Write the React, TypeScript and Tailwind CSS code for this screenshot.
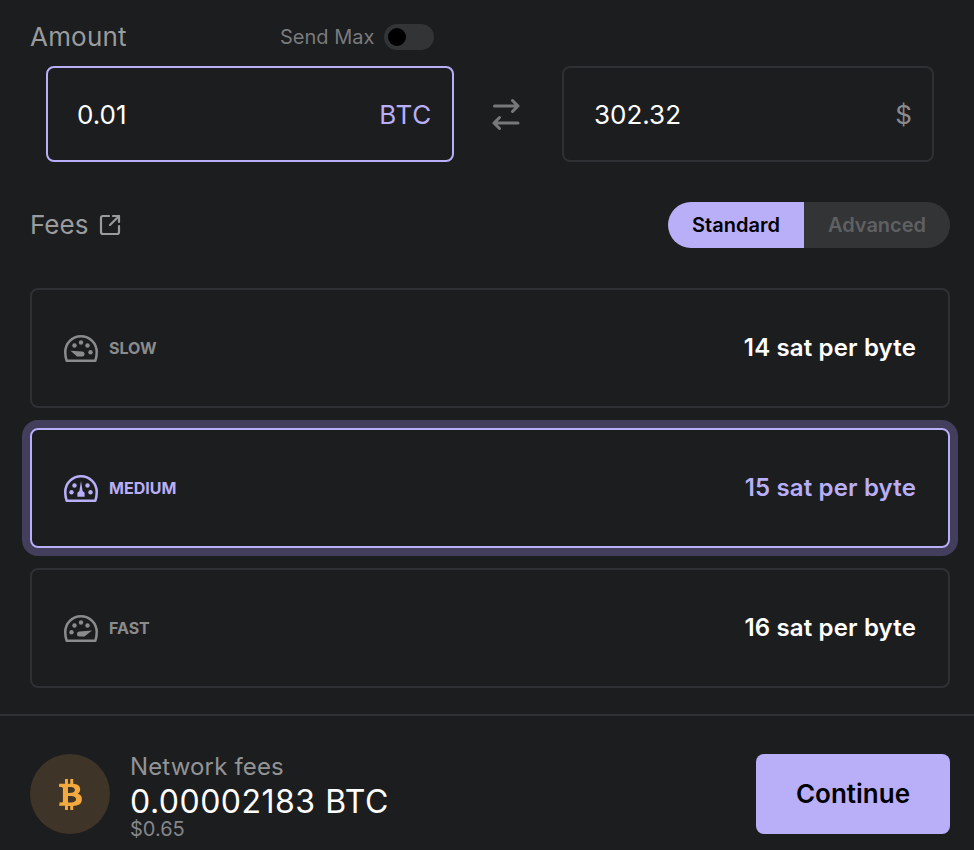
import React from "react";
import { SquareArrowOutUpRight } from "lucide-react";
import { FaBtc } from "react-icons/fa";

const speeds = [
  {
    label: "SLOW",
    value: "14 sat per byte",
    active: false,
    dots: [[10.5, 10.5], [17, 7.5], [23.5, 10.5], [26.5, 17.3]],
    needle: "M6.5 15.8 L18 16.6 A2.5 2.5 0 0 1 18 21.6 H13 Z",
  },
  {
    label: "MEDIUM",
    value: "15 sat per byte",
    active: true,
    dots: [[7.5, 17.3], [10.5, 10.5], [23.5, 10.5], [26.5, 17.3]],
    needle: "M17 6 L18.6 16 L20.6 17.8 V21.8 H13.4 V17.8 L15.4 16 Z",
  },
  {
    label: "FAST",
    value: "16 sat per byte",
    active: false,
    dots: [[7.5, 17.3], [10.5, 10.5], [17, 7.5], [23.5, 10.5]],
    needle: "M28 15.4 L15.5 16.6 A2.5 2.5 0 0 0 15.5 21.6 H20.5 Z",
  },
];

const Gauge = ({ dots, needle }: { dots: number[][]; needle: string }) => (
  <svg width="34" height="27" viewBox="0 0 34 27" fill="none" className="shrink-0">
    <path
      d="M2.6 25.7 H31.4 C32.3 23 32.75 20 32.75 17 A15.75 15.75 0 0 0 1.25 17 C1.25 20 1.7 23 2.6 25.7 Z"
      stroke="currentColor"
      strokeWidth="2.5"
      strokeLinejoin="round"
    />
    {dots.map(([cx, cy], i) => (
      <circle key={i} cx={cx} cy={cy} r="2.2" fill="currentColor" />
    ))}
    <path d={needle} fill="currentColor" />
  </svg>
);

const SwapIcon = () => (
  <svg width="30" height="32" viewBox="0 0 30 32" fill="none" stroke="#77787a" strokeWidth="3" strokeLinecap="round" strokeLinejoin="round">
    <path d="M3.5 8 H27 M21.5 2.5 L27 8 L21.5 13.5" />
    <path d="M27 25 H3 M8.5 19.5 L3 25 L8.5 30.5" />
  </svg>
);

export default function App() {
  return (
    <div className="w-[974px] h-[850px] overflow-hidden bg-[#1c1d1f] font-['Inter',sans-serif]">
      <div className="pl-[30px] pr-[24px] pt-[24px]">
        <div className="flex items-center h-[26px]">
          <span className="text-[26px] text-[#9a9b9d] w-[250px] tracking-[0.2px] pb-[1px]">Amount</span>
          <span className="text-[20px] text-[#7a7b7d]">Send Max</span>
          <div className="ml-[10px] w-[50px] h-[26px] rounded-full bg-[#333436] p-[4px]">
            <div className="w-[18px] h-[18px] rounded-full bg-black" />
          </div>
        </div>

        <div className="flex items-center mt-[16px] ml-[16px] mr-[16px]">
          <div className="w-[408px] h-[96px] flex items-center justify-between rounded-[8px] border-2 border-[#b9aef8] pl-[29px] pr-[20px]">
            <span className="text-[26px] text-white">0.01</span>
            <span className="text-[26px] text-[#b9aef8] tracking-[0.7px]">BTC</span>
          </div>
          <div className="w-[108px] flex justify-center pr-[4px]">
            <SwapIcon />
          </div>
          <div className="w-[372px] h-[96px] flex items-center justify-between rounded-[8px] border-2 border-[#2f3033] pl-[30px] pr-[20px]">
            <span className="text-[26px] text-white">302.32</span>
            <span className="text-[26px] text-[#8a8b8d]">$</span>
          </div>
        </div>

        <div className="flex items-center justify-between mt-[40px] h-[46px]">
          <div className="flex items-center gap-[10px]">
            <span className="text-[26px] text-[#9a9b9d] pb-[1px]">Fees</span>
            <SquareArrowOutUpRight size={24} strokeWidth={2.2} className="text-[#9a9b9d]" />
          </div>
          <div className="flex h-[46px] text-[20px] font-semibold">
            <div className="w-[136px] flex items-center justify-center rounded-l-full bg-[#b9aef8] text-black">Standard</div>
            <div className="w-[146px] flex items-center justify-center rounded-r-full bg-[#333436] text-[#5f6062]">Advanced</div>
          </div>
        </div>

        <div className="flex flex-col gap-[20px] mt-[40px]">
          {speeds.map((s) => (
            <div
              key={s.label}
              className={
                s.active
                  ? "h-[120px] flex items-center justify-between rounded-[8px] border-2 border-[#b9aef8] shadow-[0_0_0_8px_#423e5c] pl-[32px] pr-[32px] text-[#b9aef8]"
                  : "h-[120px] flex items-center justify-between rounded-[8px] border-2 border-[#2f3033] pl-[32px] pr-[32px] text-[#8a8b8d]"
              }
            >
              <div className="flex items-center gap-[11px]">
                <Gauge dots={s.dots} needle={s.needle} />
                <span className="text-[16px] font-bold">{s.label}</span>
              </div>
              <span className={s.active ? "text-[24px] font-semibold text-[#b9aef8] tracking-[0.15px]" : "text-[24px] font-semibold text-white tracking-[0.15px]"}>{s.value}</span>
            </div>
          ))}
        </div>
      </div>

      <div className="h-[2px] bg-[#2f3033] mt-[26px]" />

      <div className="flex items-start justify-between pl-[30px] pr-[24px] mt-[38px]">
        <div className="flex items-start gap-[20px]">
          <div className="w-[80px] h-[80px] rounded-full bg-[#3f3428] flex items-center justify-center">
            <FaBtc size={31} className="text-[#f2a93f]" />
          </div>
          <div className="flex flex-col">
            <span className="text-[24px] leading-[26px] text-[#929395] tracking-[0.15px]">Network fees</span>
            <span className="text-[32px] leading-[32px] mt-[6px] text-white tracking-[0.5px]">0.00002183 BTC</span>
            <span className="text-[20px] leading-[20px] mt-[1px] text-[#85868a]">$0.65</span>
          </div>
        </div>
        <div className="w-[194px] h-[80px] rounded-[8px] bg-[#b9aef8] flex items-center justify-center pb-[2px] text-[26px] font-semibold text-black">
          Continue
        </div>
      </div>
    </div>
  );
}
